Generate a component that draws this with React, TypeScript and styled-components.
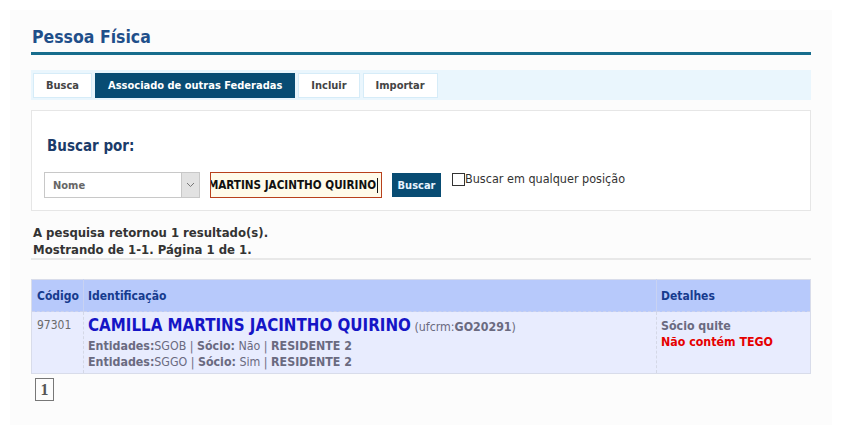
import styled, { createGlobalStyle } from "styled-components";

const GlobalStyle = createGlobalStyle`
  html, body {
    margin: 0;
    padding: 0;
    background: #ffffff;
  }
  body {
    font-family: "DejaVu Sans Condensed", "DejaVu Sans", Tahoma, sans-serif;
    font-size: 12px;
    color: #333;
  }
`;

const Page = styled.div`
  width: 863px;
  height: 446px;
  padding: 10px 0 0 10px;
  box-sizing: border-box;
`;

const Content = styled.div`
  width: 822px;
  height: 415px;
  background: #fcfcfc;
  padding: 15px 0 0 21px;
  box-sizing: border-box;
`;

const Main = styled.div`
  width: 780px;
  display: flex;
  flex-direction: column;
`;

const Title = styled.h1`
  margin: 0;
  font-size: 17.5px;
  font-weight: bold;
  color: #1f4f8a;
  line-height: 24px;
  padding-left: 1px;
  border-bottom: 3px solid #176d8d;
  padding-bottom: 3px;
`;

const TabBar = styled.div`
  margin-top: 15px;
  height: 30px;
  background: #eaf6fd;
  display: flex;
  align-items: center;
  gap: 3px;
  padding-left: 2px;
`;

const Tab = styled.div<{ $active?: boolean }>`
  height: 25px;
  box-sizing: border-box;
  padding: 0 12px;
  display: flex;
  align-items: center;
  font-size: 11px;
  font-weight: bold;
  background: ${({ $active }) => ($active ? "#084c73" : "#fff")};
  color: ${({ $active }) => ($active ? "#fff" : "#444")};
  border: 1px solid ${({ $active }) => ($active ? "#084c73" : "#d6ecf8")};
`;

const SearchPanel = styled.div`
  margin-top: 10px;
  height: 101px;
  box-sizing: border-box;
  background: #fff;
  border: 1px solid #e6e6e6;
  padding: 26px 0 0 12px;
`;

const SearchLabel = styled.div`
  font-size: 15px;
  font-weight: bold;
  color: #1b3b6a;
  padding-left: 3px;
  line-height: 18px;
`;

const SearchRow = styled.div`
  margin-top: 17px;
  display: flex;
  align-items: flex-start;
`;

const Select = styled.div`
  width: 156px;
  height: 26px;
  box-sizing: border-box;
  border: 1px solid #c8c8c8;
  background: #fff;
  display: flex;
  align-items: stretch;
`;

const SelectText = styled.div`
  flex: 1;
  display: flex;
  align-items: center;
  padding-left: 8px;
  font-size: 11px;
  font-weight: bold;
  color: #666;
`;

const SelectArrow = styled.div`
  width: 17px;
  background: #e2e2e2;
  border-left: 1px solid #c8c8c8;
  display: flex;
  align-items: center;
  justify-content: center;
`;

const TextInput = styled.div`
  margin-left: 10px;
  width: 172px;
  height: 26px;
  box-sizing: border-box;
  border: 1px solid #b8401c;
  background: #fffbea;
  display: flex;
  align-items: center;
  justify-content: flex-end;
  padding-right: 3px;
  font-size: 11.6px;
  font-weight: bold;
  color: #111;
  overflow: hidden;
  white-space: nowrap;
`;

const Caret = styled.span`
  flex: none;
  display: inline-block;
  width: 1px;
  height: 15px;
  background: #111;
  margin-left: 1px;
`;

const SearchButton = styled.div`
  margin-left: 10px;
  margin-top: 1px;
  width: 49px;
  height: 24px;
  box-sizing: border-box;
  background: #084c73;
  color: #e8f4ff;
  font-size: 11px;
  font-weight: bold;
  display: flex;
  align-items: center;
  justify-content: center;
`;

const CheckLabel = styled.label`
  margin-left: 11px;
  display: flex;
  align-items: flex-start;
  font-size: 12.5px;
  color: #333;
  line-height: 14px;
`;

const CheckBox = styled.span`
  width: 13px;
  height: 13px;
  box-sizing: border-box;
  border: 1px solid #333;
  background: #fff;
  margin-top: 1px;
`;

const Summary = styled.div`
  margin-top: 13px;
  padding-left: 2px;
  font-size: 13px;
  font-weight: bold;
  color: #333;
  line-height: 17px;
  padding-bottom: 0;
  border-bottom: 2px solid #e8e8e8;
`;

const Table = styled.table`
  margin-top: 19px;
  width: 100%;
  table-layout: fixed;
  border-collapse: collapse;
  border: 1px solid #d8dcea;
`;

const HeadCell = styled.th`
  background: #b7c9fb;
  height: 32px;
  box-sizing: border-box;
  text-align: left;
  padding: 0 4px;
  font-size: 12px;
  font-weight: bold;
  color: #163b8e;
  border-left: 1px solid #c8d2f2;
  &:first-child {
    border-left: none;
    padding-left: 5px;
  }
`;

const Cell = styled.td`
  background: #e8ecfe;
  vertical-align: top;
  padding: 2px 4px 3px;
  font-size: 12.3px;
  color: #666;
  border-left: 1px dashed #d4d8e6;
  border-top: 1px dashed #cdd3ec;
  &:first-child {
    border-left: none;
    padding-left: 5px;
  }
`;

const Code = styled.div`
  color: #6a6a6a;
  font-size: 12px;
  line-height: 15px;
  padding-top: 4px;
`;

const Name = styled.div`
  line-height: 22px;
  white-space: nowrap;
`;

const NameStrong = styled.span`
  font-size: 16.8px;
  font-weight: bold;
  color: #1515c6;
`;

const Aside = styled.span`
  font-size: 12.3px;
  color: #6a6a80;
`;

const Line = styled.div`
  color: #6a6a80;
  line-height: 16px;
`;

const Details = styled.div`
  padding-top: 4px;
`;

const Detail = styled.div<{ $alert?: boolean }>`
  font-weight: bold;
  font-size: 12.3px;
  line-height: 16px;
  color: ${({ $alert }) => ($alert ? "#e60000" : "#6a6a80")};
`;

const Pager = styled.div`
  margin-top: 4px;
  margin-left: 4px;
  width: 19px;
  height: 23px;
  box-sizing: border-box;
  border: 1px solid #777;
  display: flex;
  align-items: center;
  justify-content: center;
  font-family: "Liberation Serif", "DejaVu Serif", serif;
  font-size: 16px;
  font-weight: bold;
  color: #555;
`;

export default function App() {
  return (
    <>
      <GlobalStyle />
      <Page>
        <Content>
          <Main>
            <Title>Pessoa Física</Title>
            <TabBar>
              <Tab>Busca</Tab>
              <Tab $active>Associado de outras Federadas</Tab>
              <Tab>Incluir</Tab>
              <Tab>Importar</Tab>
            </TabBar>
            <SearchPanel>
              <SearchLabel>Buscar por:</SearchLabel>
              <SearchRow>
                <Select>
                  <SelectText>Nome</SelectText>
                  <SelectArrow>
                    <svg width="9" height="6" viewBox="0 0 9 6">
                      <path d="M1 1 L4.5 4.5 L8 1" fill="none" stroke="#777" strokeWidth="1" />
                    </svg>
                  </SelectArrow>
                </Select>
                <TextInput>
                  <span>CAMILLA MARTINS JACINTHO QUIRINO</span>
                  <Caret />
                </TextInput>
                <SearchButton>Buscar</SearchButton>
                <CheckLabel>
                  <CheckBox />
                  Buscar em qualquer posição
                </CheckLabel>
              </SearchRow>
            </SearchPanel>
            <Summary>
              A pesquisa retornou 1 resultado(s).
              <br />
              Mostrando de 1-1. Página 1 de 1.
            </Summary>
            <Table>
              <colgroup>
                <col style={{ width: 52 }} />
                <col />
                <col style={{ width: 154 }} />
              </colgroup>
              <thead>
                <tr>
                  <HeadCell>Código</HeadCell>
                  <HeadCell>Identificação</HeadCell>
                  <HeadCell>Detalhes</HeadCell>
                </tr>
              </thead>
              <tbody>
                <tr>
                  <Cell>
                    <Code>97301</Code>
                  </Cell>
                  <Cell>
                    <Name>
                      <NameStrong>CAMILLA MARTINS JACINTHO QUIRINO</NameStrong>{" "}
                      <Aside>
                        (ufcrm:<b>GO20291</b>)
                      </Aside>
                    </Name>
                    <Line>
                      <b>Entidades:</b>SGOB | <b>Sócio:</b> Não | <b>RESIDENTE 2</b>
                    </Line>
                    <Line>
                      <b>Entidades:</b>SGGO | <b>Sócio:</b> Sim | <b>RESIDENTE 2</b>
                    </Line>
                  </Cell>
                  <Cell>
                    <Details>
                      <Detail>Sócio quite</Detail>
                      <Detail $alert>Não contém TEGO</Detail>
                    </Details>
                  </Cell>
                </tr>
              </tbody>
            </Table>
            <Pager>1</Pager>
          </Main>
        </Content>
      </Page>
    </>
  );
}
